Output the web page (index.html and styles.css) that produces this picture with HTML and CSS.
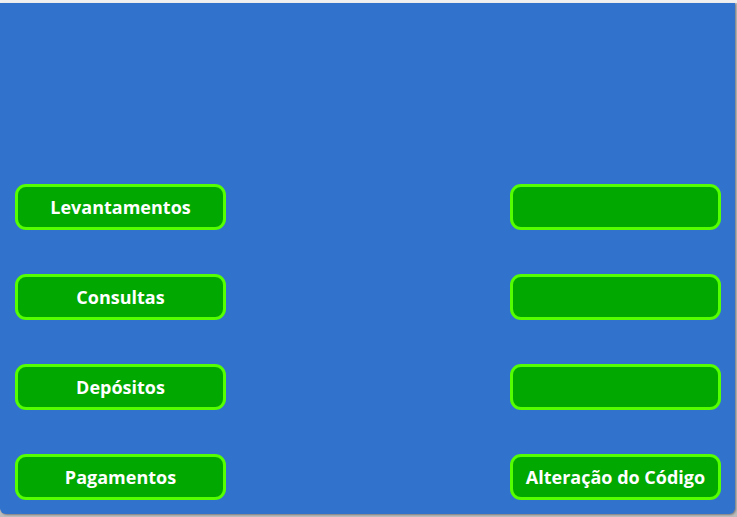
FILE: index.html
```html
<!DOCTYPE html>
<html lang="pt">
<head>
<meta charset="utf-8">
<title>Menu</title>
<link rel="stylesheet" href="styles.css">
</head>
<body>
<div class="topbar"></div>
<div class="panel">
  <div class="grid">
    <button class="btn">Levantamentos</button>
    <button class="btn"></button>
    <button class="btn">Consultas</button>
    <button class="btn"></button>
    <button class="btn">Depósitos</button>
    <button class="btn"></button>
    <button class="btn">Pagamentos</button>
    <button class="btn">Alteração do Código</button>
  </div>
</div>
</body>
</html>
```
FILE: styles.css
```css
html, body {
  margin: 0;
  padding: 0;
  background: #bdbdbd;
  height: 100%;
  overflow: hidden;
}
.topbar {
  height: 3px;
  background: #f0f0f0;
}
.panel {
  width: 735px;
  height: 511px;
  box-sizing: border-box;
  background: #3173cc;
  border-radius: 0 0 6px 6px;
  box-shadow: 1px 1px 2px rgba(0,0,0,0.35);
  padding: 181px 14px 0 15px;
}
.grid {
  display: grid;
  grid-template-columns: 211px 211px;
  grid-auto-rows: 46px;
  row-gap: 44px;
  justify-content: space-between;
}
.btn {
  box-sizing: border-box;
  background: #00a800;
  border: 3px solid #55ff00;
  border-radius: 11px;
  color: #ffffff;
  font-family: "Open Sans", "Noto Sans", sans-serif;
  font-weight: 700;
  font-size: 18px;
  padding: 0;
  margin: 0;
  display: flex;
  align-items: center;
  justify-content: center;
}
```
